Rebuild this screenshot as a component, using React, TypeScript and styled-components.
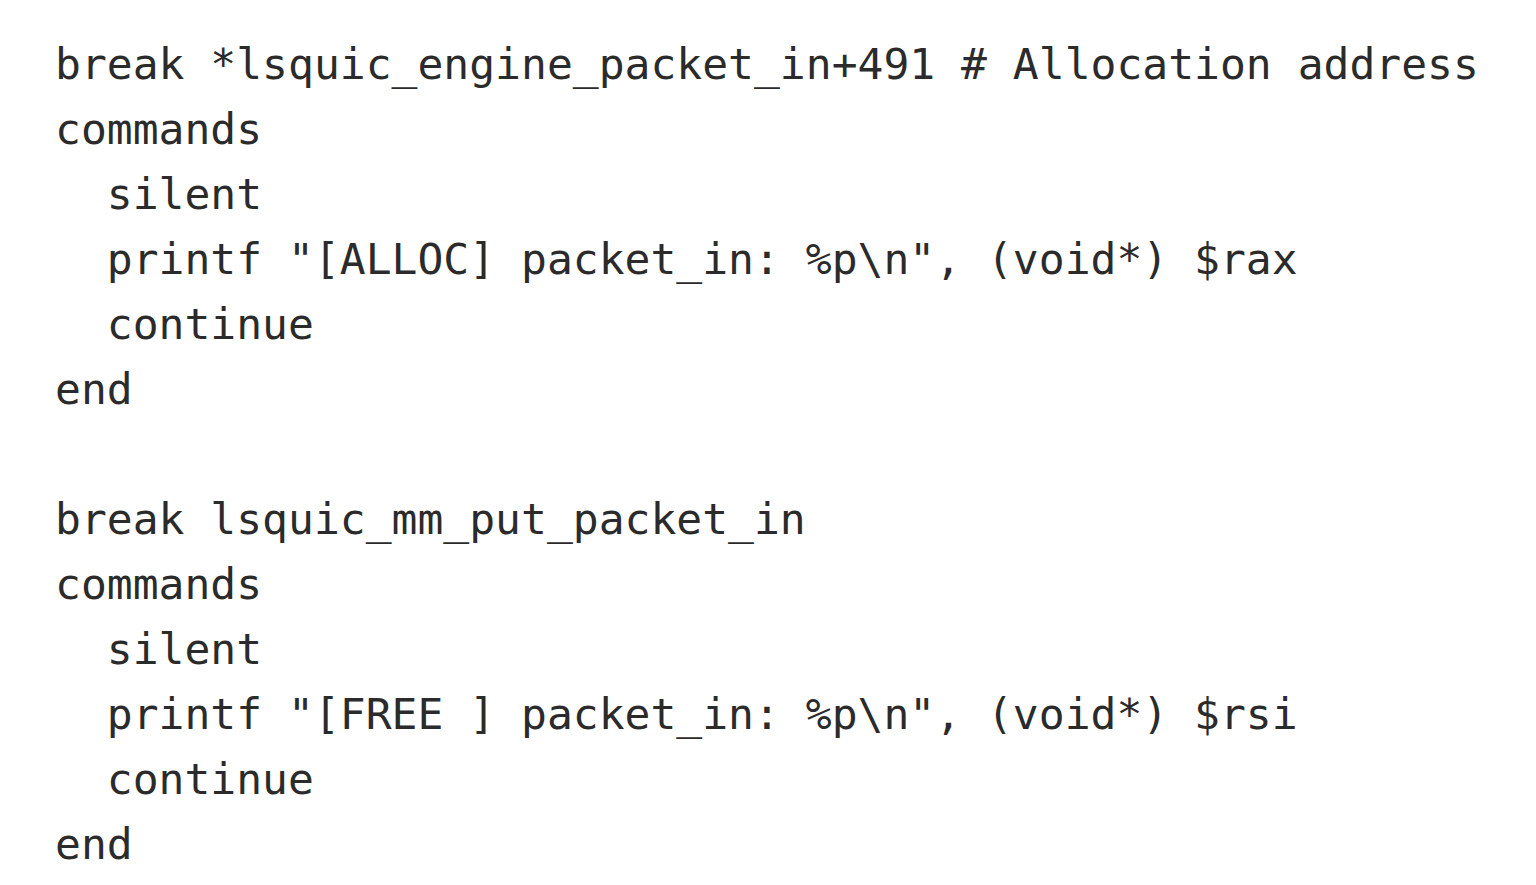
import React from "react";
import styled, { createGlobalStyle } from "styled-components";

const Global = createGlobalStyle`
  html, body { margin: 0; padding: 0; background: #ffffff; }
`;

const Code = styled.pre`
  margin: 0;
  padding: 32px 0 0 55px;
  font-family: "DejaVu Sans Mono", "Liberation Mono", monospace;
  font-size: 43px;
  line-height: 65px;
  color: #2b2b2b;
  white-space: pre;
`;

const lines = [
  "break *lsquic_engine_packet_in+491 # Allocation address",
  "commands",
  "  silent",
  '  printf "[ALLOC] packet_in: %p\\n", (void*) $rax',
  "  continue",
  "end",
  "",
  "break lsquic_mm_put_packet_in",
  "commands",
  "  silent",
  '  printf "[FREE ] packet_in: %p\\n", (void*) $rsi',
  "  continue",
  "end",
];

export default function App() {
  return (
    <>
      <Global />
      <Code>{lines.join("\n")}</Code>
    </>
  );
}
